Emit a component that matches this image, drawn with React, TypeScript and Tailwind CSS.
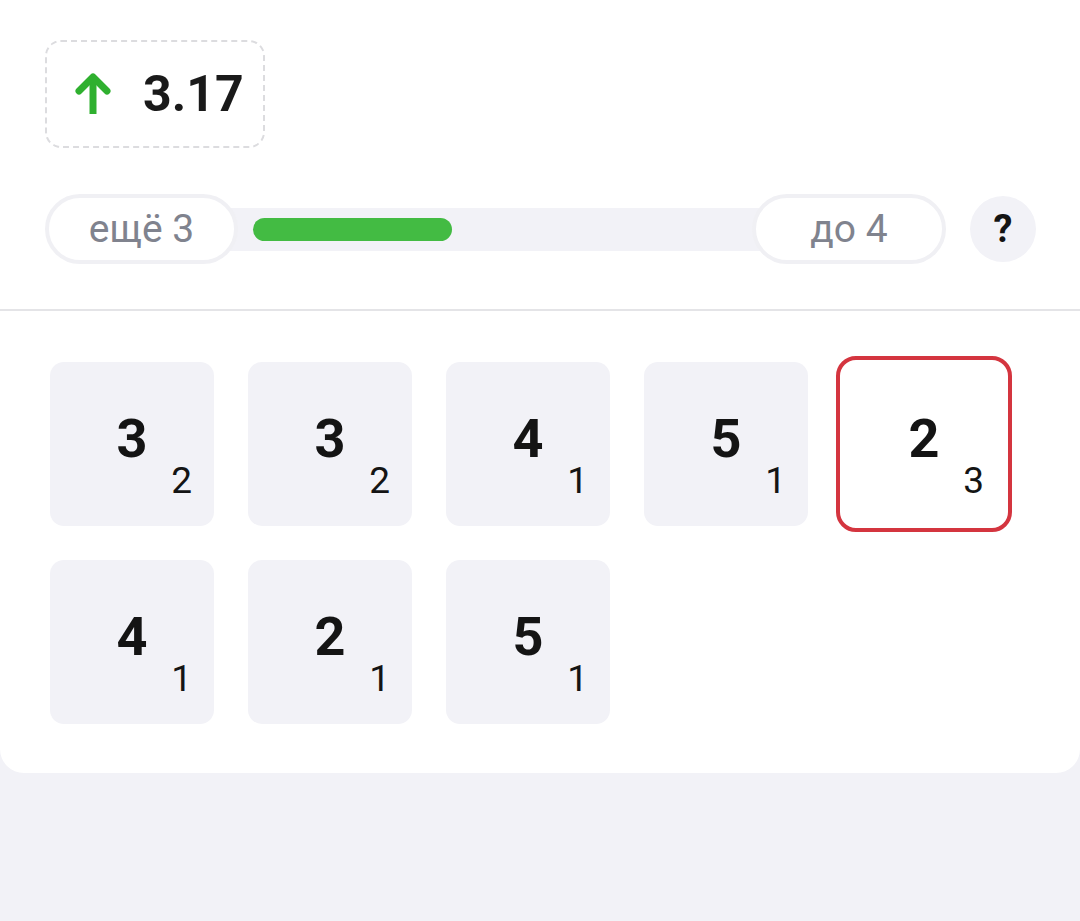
import React from "react";

const tiles: { main: string; sub: string; selected?: boolean }[] = [
  { main: "3", sub: "2" },
  { main: "3", sub: "2" },
  { main: "4", sub: "1" },
  { main: "5", sub: "1" },
  { main: "2", sub: "3", selected: true },
  { main: "4", sub: "1" },
  { main: "2", sub: "1" },
  { main: "5", sub: "1" },
];

function Tile({ main, sub, selected }: { main: string; sub: string; selected?: boolean }) {
  return (
    <div
      className={
        selected
          ? "relative w-[164px] h-[164px] rounded-[14px] bg-white outline-4 outline-[#d4353f] outline-offset-2 flex items-center justify-center pb-[10px]"
          : "relative w-[164px] h-[164px] rounded-[14px] bg-[#f2f2f7] flex items-center justify-center pb-[10px]"
      }
    >
      <span className="text-[54px] leading-none font-bold text-[#141414]">{main}</span>
      <span className="absolute right-[22px] bottom-[27px] text-[37px] leading-none font-normal text-[#141414]">{sub}</span>
    </div>
  );
}

export default function App() {
  return (
    <div
      className="min-h-[921px] w-full bg-[#f2f2f7]"
      style={{ fontFamily: "Roboto, 'Noto Sans', 'Liberation Sans', sans-serif" }}
    >
      <div className="bg-white rounded-b-[24px] pb-[49px]">
        <div className="pt-[40px] pl-[45px]">
          <div className="w-[220px] h-[108px] border-2 border-dashed border-[#dcdcdf] rounded-[16px] flex items-center pl-[28px] gap-[32px]">
            <svg width="36" height="44" viewBox="0 0 36 44" fill="none">
              <path d="M18 42 V6" stroke="#2fb02f" strokeWidth="7" strokeLinecap="butt" />
              <path d="M4 19 L18 5 L32 19" stroke="#2fb02f" strokeWidth="7" strokeLinecap="round" strokeLinejoin="round" />
            </svg>
            <span className="text-[50px] leading-none font-bold text-[#1a1a1a]">3.17</span>
          </div>

          <div className="mt-[46px] flex items-center h-[70px]">
            <div className="flex items-center w-[901px] h-[70px]">
              <div className="relative z-10 w-[193px] h-[70px] shrink-0 rounded-full bg-white border-4 border-[#f0f0f4] flex items-center justify-center text-[39px] leading-none text-[#80838e]">
                ещё 3
              </div>
              <div className="flex-1 h-[43px] bg-[#f2f2f7] -mx-[10px] flex items-center pl-[25px]">
                <div className="w-[199px] h-[23px] rounded-full bg-[#43bb43]" />
              </div>
              <div className="relative z-10 w-[194px] h-[70px] shrink-0 rounded-full bg-white border-4 border-[#f0f0f4] flex items-center justify-center text-[39px] leading-none text-[#80838e]">
                до 4
              </div>
            </div>
            <div className="ml-[24px] w-[66px] h-[66px] rounded-full bg-[#f2f2f7] flex items-center justify-center text-[38px] leading-none font-bold text-[#141414]">
              ?
            </div>
          </div>
        </div>

        <div className="mt-[45px] h-[2px] bg-[#e4e4e7]" />

        <div className="pt-[51px] pl-[50px] grid grid-cols-[repeat(5,164px)] gap-[34px]">
          {tiles.map((t, i) => (
            <Tile key={i} {...t} />
          ))}
        </div>
      </div>
    </div>
  );
}
